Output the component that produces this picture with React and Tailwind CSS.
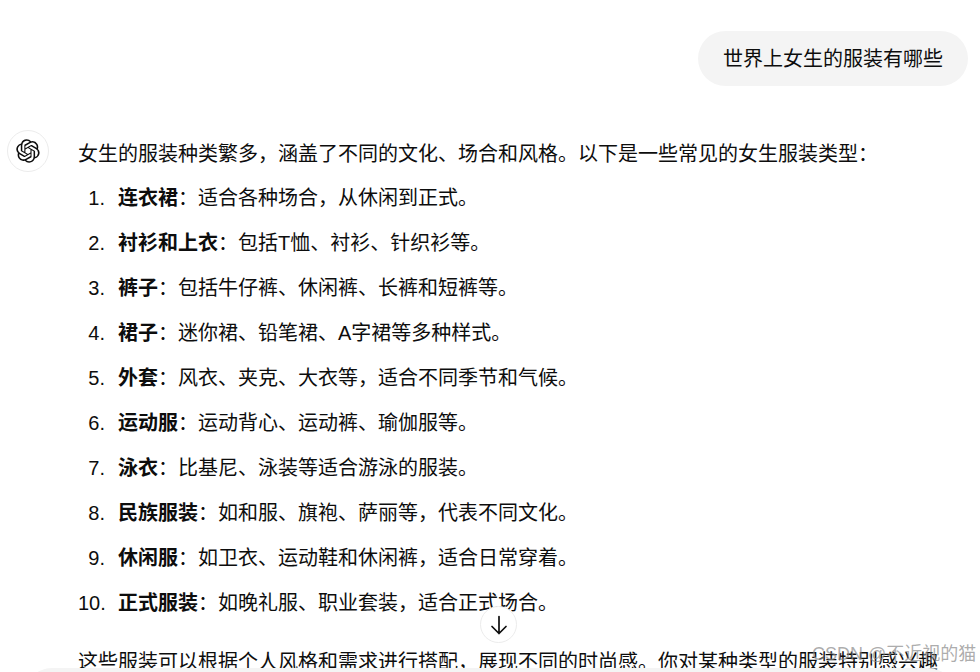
const items = [
  ["连衣裙", "：适合各种场合，从休闲到正式。"],
  ["衬衫和上衣", "：包括T恤、衬衫、针织衫等。"],
  ["裤子", "：包括牛仔裤、休闲裤、长裤和短裤等。"],
  ["裙子", "：迷你裙、铅笔裙、A字裙等多种样式。"],
  ["外套", "：风衣、夹克、大衣等，适合不同季节和气候。"],
  ["运动服", "：运动背心、运动裤、瑜伽服等。"],
  ["泳衣", "：比基尼、泳装等适合游泳的服装。"],
  ["民族服装", "：如和服、旗袍、萨丽等，代表不同文化。"],
  ["休闲服", "：如卫衣、运动鞋和休闲裤，适合日常穿着。"],
  ["正式服装", "：如晚礼服、职业套装，适合正式场合。"],
];

function Logo() {
  return (
    <svg width="24" height="24" viewBox="0 0 41 41" fill="none">
      <path
        d="M37.532 16.87a9.963 9.963 0 0 0-.856-8.184 10.078 10.078 0 0 0-10.855-4.835A9.964 9.964 0 0 0 18.306.5a10.079 10.079 0 0 0-9.614 6.977 9.967 9.967 0 0 0-6.664 4.834 10.08 10.08 0 0 0 1.24 11.817 9.965 9.965 0 0 0 .856 8.185 10.079 10.079 0 0 0 10.855 4.835 9.965 9.965 0 0 0 7.516 3.35 10.078 10.078 0 0 0 9.617-6.981 9.967 9.967 0 0 0 6.663-4.834 10.079 10.079 0 0 0-1.243-11.813ZM22.498 37.886a7.474 7.474 0 0 1-4.799-1.735c.061-.033.168-.091.237-.134l7.964-4.6a1.294 1.294 0 0 0 .655-1.134V19.054l3.366 1.944a.12.12 0 0 1 .066.092v9.299a7.505 7.505 0 0 1-7.49 7.496ZM6.392 31.006a7.471 7.471 0 0 1-.894-5.023c.06.036.162.099.237.141l7.964 4.6a1.297 1.297 0 0 0 1.308 0l9.724-5.614v3.888a.12.12 0 0 1-.048.103l-8.051 4.649a7.504 7.504 0 0 1-10.24-2.744ZM4.297 13.62A7.469 7.469 0 0 1 8.2 10.333c0 .068-.004.19-.004.274v9.201a1.294 1.294 0 0 0 .654 1.132l9.723 5.614-3.366 1.944a.12.12 0 0 1-.114.01L7.04 23.856a7.504 7.504 0 0 1-2.743-10.237Zm27.658 6.437-9.724-5.615 3.367-1.943a.121.121 0 0 1 .113-.01l8.052 4.648a7.498 7.498 0 0 1-1.158 13.528v-9.476a1.293 1.293 0 0 0-.65-1.132Zm3.35-5.043c-.059-.037-.162-.099-.236-.141l-7.965-4.6a1.298 1.298 0 0 0-1.308 0l-9.723 5.614v-3.888a.12.12 0 0 1 .048-.103l8.05-4.645a7.497 7.497 0 0 1 11.135 7.763Zm-21.063 6.929-3.367-1.944a.12.12 0 0 1-.065-.092v-9.299a7.497 7.497 0 0 1 12.293-5.756 6.94 6.94 0 0 0-.236.134l-7.965 4.6a1.294 1.294 0 0 0-.654 1.132l-.006 11.225Zm1.829-3.943 4.33-2.501 4.332 2.5v5l-4.331 2.5-4.331-2.5V18Z"
        fill="#0d0d0d"
      />
    </svg>
  );
}

export default function App() {
  return (
    <div
      className="relative h-[672px] w-[980px] overflow-hidden bg-white text-[20px] leading-[30px] text-[#0d0d0d]"
      style={{ fontFamily: '"Liberation Sans", "Noto Sans CJK SC", sans-serif' }}
    >
      <div className="flex justify-end pt-[31px] pr-3">
        <div className="rounded-[28px] bg-[#f4f4f4] px-[25px] py-[12.5px]">世界上女生的服装有哪些</div>
      </div>

      <div className="mt-[44px] flex gap-[29px] pl-[7px]">
        <div className="flex h-[42px] w-[42px] shrink-0 items-center justify-center rounded-full border border-[#ececec]">
          <Logo />
        </div>
        <div className="w-[880px] pt-[9px]">
          <p className="whitespace-nowrap">女生的服装种类繁多，涵盖了不同的文化、场合和风格。以下是一些常见的女生服装类型：</p>
          <ol className="mt-[14px]">
            {items.map(([b, t], i) => (
              <li key={b} className="mt-[15px] flex whitespace-nowrap first:mt-0">
                <span className="w-[40px] shrink-0 pr-[13px] text-right">{i + 1}.</span>
                <span>
                  <strong className="font-bold">{b}</strong>
                  {t}
                </span>
              </li>
            ))}
          </ol>
          <p className="mt-[29px] whitespace-nowrap">这些服装可以根据个人风格和需求进行搭配，展现不同的时尚感。你对某种类型的服装特别感兴趣</p>
        </div>
      </div>

      <button className="absolute left-[480px] top-[606px] flex h-[37px] w-[37px] items-center justify-center rounded-full border border-[#ececec] bg-white">
        <svg width="22" height="22" viewBox="0 0 22 22" fill="none" stroke="#0d0d0d" strokeWidth="1.7" strokeLinecap="round" strokeLinejoin="round">
          <path d="M11 2.5v17M4 12.5l7 7 7-7" />
        </svg>
      </button>

      <div className="absolute left-[24px] top-[668px] h-[40px] w-[932px] rounded-t-[28px] bg-[#f4f4f4]" />

      <div className="absolute left-[812px] top-[641px] text-[18px] leading-[26px] whitespace-nowrap text-[#888888]/70">CSDN @不近视的猫</div>
    </div>
  );
}
